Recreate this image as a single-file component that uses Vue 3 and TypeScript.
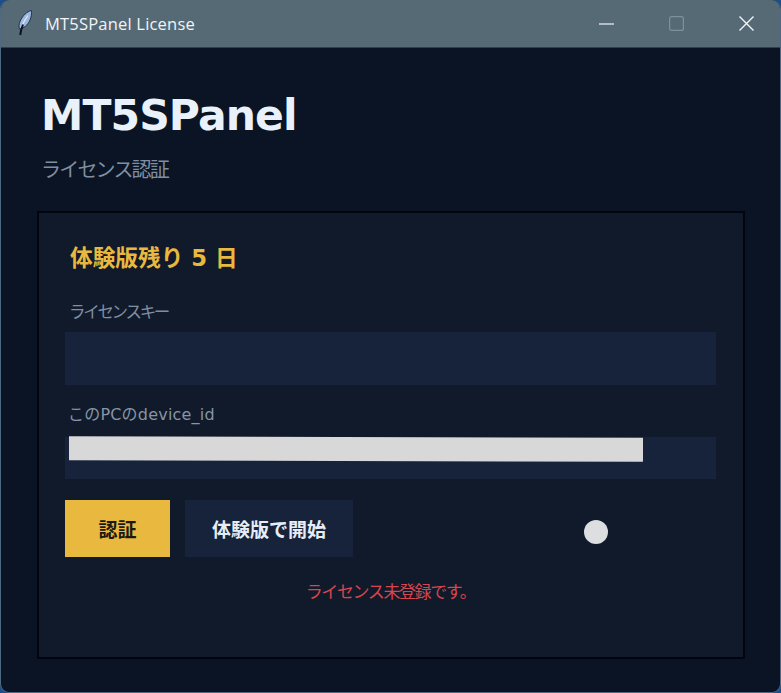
<script setup lang="ts">
const title = 'MT5SPanel License'
</script>

<template>
  <div class="desktop">
    <div class="window">
      <header class="titlebar">
        <svg class="feather" width="16" height="26" viewBox="0 0 16 26">
          <path d="M14.500 0.500C10 1.500 5.500 5.500 3 11.500c-1 2.500-1.200 5-.6 7.500C6.500 18.500 11 15 13 10c1.300-3.200 1.800-6.500 1.500-9.500z" fill="#9db8de" stroke="#22344e" stroke-width="1" />
          <path d="M11 5.500C8 9.500 5.500 14 4.500 18" fill="none" stroke="#e4edf8" stroke-width="1.200" />
          <path d="M6 14.500C4.800 17.500 3.800 20.500 3.200 25" fill="none" stroke="#0c121c" stroke-width="2" />
        </svg>
        <span class="window-title">{{ title }}</span>
        <div class="controls">
          <span class="ctl"><svg width="15" height="15" viewBox="0 0 15 15"><path d="M0 8H15" stroke="#f2f5f7" stroke-width="1.200" /></svg></span>
          <span class="ctl"><svg width="15" height="15" viewBox="0 0 15 15"><rect x="0.600" y="0.600" width="13.800" height="13.800" rx="2" fill="none" stroke="#7d919d" stroke-width="1.200" /></svg></span>
          <span class="ctl"><svg width="15" height="15" viewBox="0 0 15 15"><path d="M0.500 0.500L14.500 14.500M14.500 0.500L0.500 14.500" stroke="#f4f6f8" stroke-width="1.400" /></svg></span>
        </div>
      </header>
      <main class="content">
        <h1 class="brand">MT5SPanel</h1>
        <p class="subtitle">ライセンス認証</p>
        <section class="card">
          <h2 class="trial">体験版残り 5 日</h2>
          <label class="label key-label">ライセンスキー</label>
          <div class="field key-field"></div>
          <label class="label id-label">このPCのdevice_id</label>
          <div class="field id-field"><div class="redact"></div></div>
          <div class="actions">
            <button class="btn primary">認証</button>
            <button class="btn secondary">体験版で開始</button>
            <span class="dot"></span>
          </div>
          <p class="status">ライセンス未登録です。</p>
        </section>
      </main>
    </div>
  </div>
</template>

<style>
html, body { margin: 0; background: #1a4f8c; }
</style>

<style scoped>
.desktop {
  width: 781px;
  height: 693px;
  background: #1a4f8c;
  overflow: hidden;
  font-family: "DejaVu Sans", "Noto Sans CJK JP", sans-serif;
}
.window {
  width: 781px;
  height: 693px;
  box-sizing: border-box;
  border-radius: 9px;
  overflow: hidden;
  display: flex;
  flex-direction: column;
  background: #0a1424;
  border: 1px solid #4f6a80;
  border-top: 0;
}
.titlebar {
  height: 48px;
  flex: none;
  display: flex;
  align-items: center;
  background: #566a76;
  border-bottom: 1px solid #2e3f4d;
  box-sizing: border-box;
  padding-left: 16px;
}
.feather { flex: none; margin-top: -1px; }
.window-title {
  margin-left: 12px;
  color: #f1f4f6;
  font-size: 16.500px;
  font-family: "Open Sans", "Noto Sans", sans-serif;
  letter-spacing: 0.200px;
}
.controls {
  margin-left: auto;
  display: flex;
  gap: 55px;
  padding-right: 26px;
}
.ctl { display: block; width: 15px; height: 15px; }
.content {
  flex: 1;
  padding: 0 35px 33px 36px;
  display: flex;
  flex-direction: column;
  min-height: 0;
}
.brand {
  margin: 41px 0 0 4px;
  font-size: 42.500px;
  line-height: 54px;
  font-weight: 700;
  letter-spacing: -0.900px;
  color: #e9f1fb;
}
.subtitle {
  margin: 11px 0 0 4px;
  font-size: 20px;
  line-height: 30px;
  font-weight: 400;
  letter-spacing: -1.800px;
  color: #7f8ea2;
  font-family: "Noto Sans CJK JP", sans-serif;
}
.card {
  position: relative;
  margin-top: 27px;
  flex: 1;
  box-sizing: border-box;
  background: #101a2a;
  border: 2px solid #02060c;
  padding: 0 27px 0 26px;
  display: flex;
  flex-direction: column;
}
.trial {
  margin: 29px 0 0 5px;
  font-size: 22.700px;
  line-height: 32px;
  font-weight: 700;
  color: #e8b93e;
}
.label {
  display: block;
  line-height: 24px;
  color: #8695a8;
}
.key-label {
  margin: 25px 0 0 4px;
  font-size: 16.500px;
  letter-spacing: -2.300px;
  font-weight: 400;
  color: #7f8ea2;
  font-family: "Noto Sans CJK JP", sans-serif;
}
.field { background: #17233a; }
.key-field { height: 53px; margin-top: 9px; }
.id-label { margin: 18px 0 0 3px; font-size: 16px; letter-spacing: 0.200px; }
.id-field { position: relative; height: 42px; margin-top: 10px; }
.redact {
  position: absolute;
  left: 4px;
  top: 0;
  width: 574px;
  height: 24px;
  background: #d8d8d8;
  transform: rotate(0.150deg);
}
.actions {
  position: relative;
  display: flex;
  gap: 15px;
  margin-top: 21px;
}
.btn {
  height: 57px;
  border: 0;
  padding: 0;
  font-family: "Noto Sans CJK JP", sans-serif;
  font-size: 19px;
  font-weight: 700;
}
.primary { width: 105px; background: #e8b93e; color: #1c1a12; }
.secondary { width: 168px; background: #17233a; color: #e6edf7; }
.dot {
  position: absolute;
  left: 519px;
  top: 20px;
  width: 24px;
  height: 24px;
  border-radius: 50%;
  background: #dcdee0;
}
.status {
  margin: 21px 0 0;
  text-align: center;
  font-family: "Noto Sans CJK JP", sans-serif;
  font-size: 17px;
  line-height: 26px;
  letter-spacing: -1.400px;
  color: #d9454d;
}
</style>
